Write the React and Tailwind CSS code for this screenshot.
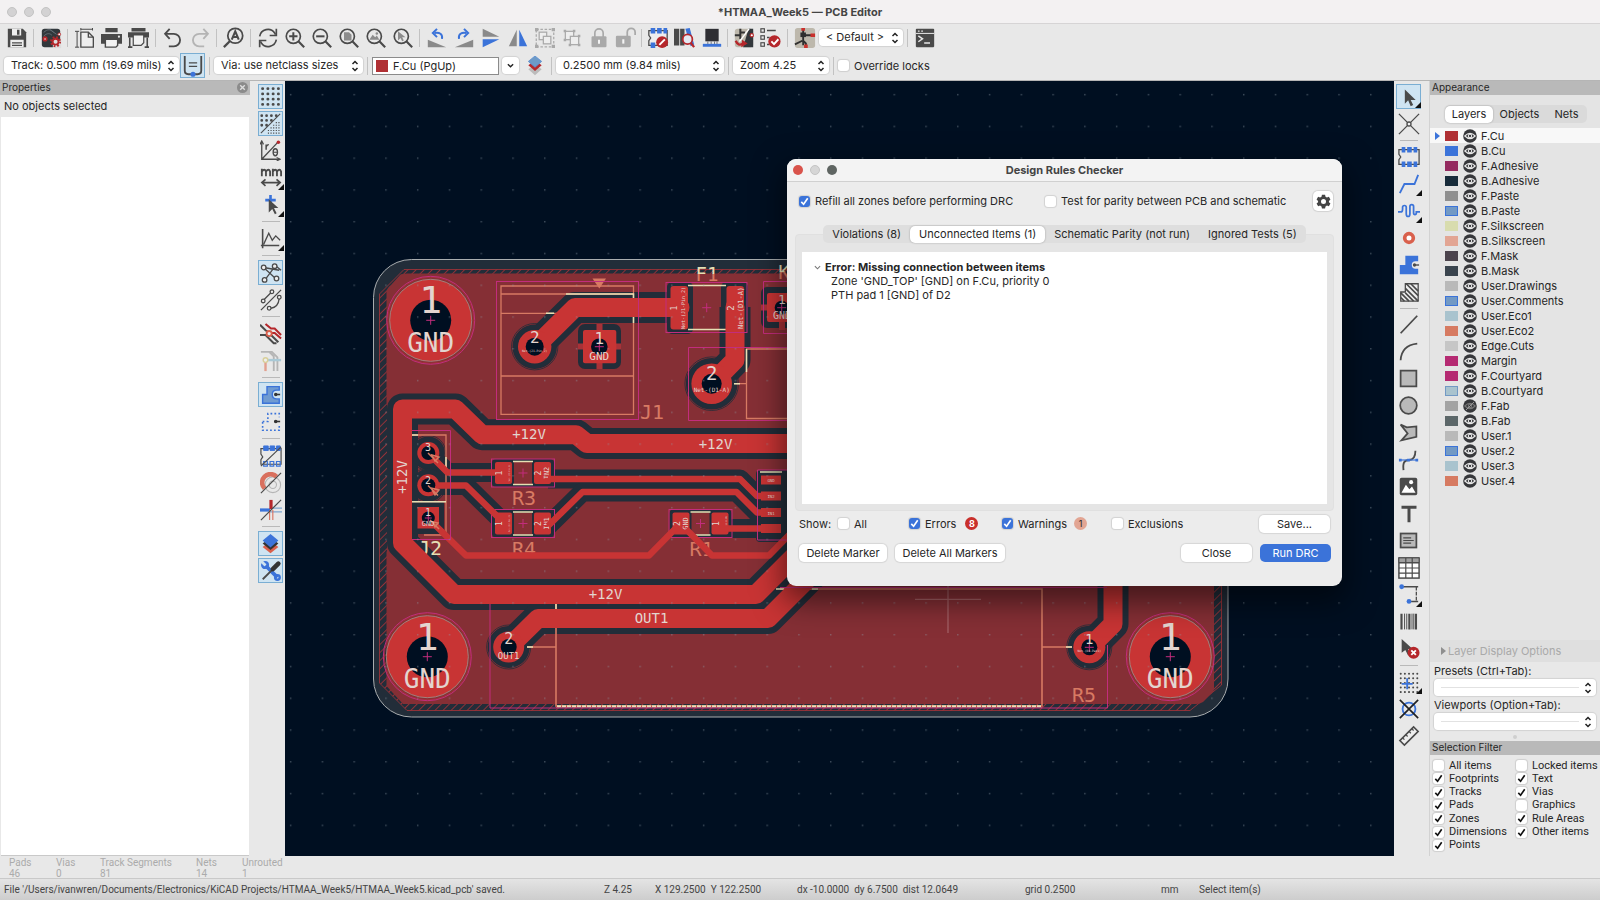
import React from 'react';
import { clsx } from 'clsx';

const INK = '#4a4a4a';
const BLUE = '#3b73d9';
const RED = '#b5272b';

const Icon = ({ children, size = 20 }) => (
  <svg width={size} height={size} viewBox="0 0 24 24" fill="none" stroke={INK} strokeWidth="2" className="shrink-0" aria-hidden="true">
    {children}
  </svg>
);

const Lens = ({ children }) => (
  <Icon>
    <circle cx="10" cy="10" r="8.5" />
    <path d="M16 16l7 7" strokeWidth="2.6" />
    {children}
  </Icon>
);

const icons = {
  save: (
    <Icon>
      <path d="M1 1h18l4 4v18H1z" fill={INK} stroke="none" />
      <path d="M6 1h11v8H6zM4 14h16v9H4z" fill="#eee" stroke="none" />
      <path d="M12 2h3v6h-3zM6 17h12v1.5H6zM6 20h12v1.5H6z" fill={INK} stroke="none" />
    </Icon>
  ),
  boardSetup: (
    <Icon size={22}>
      <rect x="2" y="2" width="20" height="20" rx="3" fill="#32383c" stroke="none" />
      <path d="M4 6c4-4 8-4 11 0M4 10c4-4 7-3 9-1M11 3l7 5" stroke="#667077" strokeWidth="1" />
      <circle cx="5.5" cy="13" r="1.800" fill="#fff" stroke={RED} />
      <path d="M14 14h9v9h-9z" fill="#ddd" stroke="none" />
      <circle cx="17" cy="16" r="3.200" stroke={RED} strokeWidth="2" fill="#ddd" />
      <circle cx="17" cy="16" r="5" stroke={RED} strokeWidth="2" strokeDasharray="2 1.930" />
      <circle cx="21" cy="8" r="1.500" fill="#fff" stroke={RED} strokeWidth="1" />
    </Icon>
  ),
  page: (
    <Icon>
      <path d="M7 5h9l6 6v12H7z" fill="#eee" strokeWidth="1.6" />
      <path d="M16 5v6h6" strokeWidth="1.6" />
      <path d="M2.500 4v19M0 4h5M0 23h5M7 0v3M21 0v3M7 1.500h14" strokeWidth="1.2" />
    </Icon>
  ),
  print: (
    <Icon size={21}>
      <path d="M5 1h14v5H5zM0 8h24v11H0z" fill={INK} stroke="none" />
      <path d="M5 14h14v7l-2 2H5z" fill="#f2f2f2" strokeWidth="1.6" />
      <circle cx="20.500" cy="11" r="1.200" fill="#eee" stroke="none" />
    </Icon>
  ),
  plot: (
    <Icon size={21}>
      <path d="M4 1h16v4H4zM0 6h24v6H0z" fill={INK} stroke="none" />
      <path d="M2 12v11M22 12v11M0 23h5M19 23h5" strokeWidth="1.8" />
      <path d="M6 9h12v9l-3 3H6z" fill="#f2f2f2" strokeWidth="1.4" />
    </Icon>
  ),
  undo: (
    <Icon>
      <path d="M3 7h10a7.500 7.500 0 0 1 0 15H7" strokeWidth="2.200" />
      <path d="M8 1L2.500 7L8 13" strokeWidth="2.200" />
    </Icon>
  ),
  redo: (
    <Icon>
      <g stroke="#b4b4b4">
        <path d="M21 7H11a7.500 7.500 0 0 0 0 15h6" strokeWidth="2.200" />
        <path d="M16 1l5.500 6L16 13" strokeWidth="2.200" />
      </g>
    </Icon>
  ),
  find: (
    <Icon size={21}>
      <circle cx="14" cy="10" r="8.500" />
      <path d="M8 16l-7 7" strokeWidth="2.600" />
      <path d="M10 14.500L14 5l4 9.500M11.500 11.500h5" strokeWidth="2.400" />
    </Icon>
  ),
  refresh: (
    <Icon>
      <path d="M2 10a10 10 0 0 1 18-4l1 2M22 14a10 10 0 0 1-18 4l-1-2" />
      <path d="M22 1v8h-8M2 23v-8h8" />
    </Icon>
  ),
  zoomIn: <Lens><path d="M10 5v10M5 10h10" strokeWidth="2.400" /></Lens>,
  zoomOut: <Lens><path d="M5 10h10" strokeWidth="2.400" /></Lens>,
  zoomPage: <Lens><path d="M6 5h6l3 3v7H6z" fill="#8c8c8c" stroke="none" /></Lens>,
  zoomObjects: (
    <Lens>
      <path d="M4 14l4-6 3 3 2-2 3 5z" fill="#8c8c8c" stroke="none" />
      <circle cx="13" cy="6.500" r="1.500" fill="#8c8c8c" stroke="none" />
    </Lens>
  ),
  zoomSelection: <Lens><path d="M6 4v11l3-3 2 4 2-1-2-4h4z" fill="#8c8c8c" stroke="none" /></Lens>,
  rotateCcw: (
    <Icon>
      <path d="M1 14v9h22z" fill="#8a8a8a" stroke="none" />
      <path d="M18 13c1-6-3-8-9-7" stroke={BLUE} strokeWidth="2.400" />
      <path d="M12 1L7 6l5 5" stroke={BLUE} strokeWidth="2.400" />
    </Icon>
  ),
  rotateCw: (
    <Icon>
      <path d="M23 14v9H1z" fill="#8a8a8a" stroke="none" />
      <path d="M6 13C5 7 9 5 15 6" stroke={BLUE} strokeWidth="2.400" />
      <path d="M12 1l5 5-5 5" stroke={BLUE} strokeWidth="2.400" />
    </Icon>
  ),
  flipV: (
    <Icon>
      <path d="M2 1l20 9.500H2z" fill="#8a8a8a" stroke="none" />
      <path d="M2 23l20-9.500H2z" fill={BLUE} stroke="none" />
    </Icon>
  ),
  flipH: (
    <Icon>
      <path d="M1 22L10.500 2v20z" fill="#8a8a8a" stroke="none" />
      <path d="M23 22L13.500 2v20z" fill={BLUE} stroke="none" />
    </Icon>
  ),
  group: (
    <Icon>
      <g stroke="#a9a9a9">
        <rect x="1.500" y="1.500" width="21" height="21" strokeWidth="1.500" strokeDasharray="3 2" />
        <rect x="5" y="5" width="9" height="9" fill="#eee" strokeWidth="1.500" />
        <rect x="10" y="10" width="9" height="9" fill="#eee" strokeWidth="1.500" />
        <path d="M0 0h4v4H0zM20 0h4v4h-4zM0 20h4v4H0zM20 20h4v4h-4z" fill="#a9a9a9" stroke="none" />
      </g>
    </Icon>
  ),
  ungroup: (
    <Icon>
      <g stroke="#a9a9a9" strokeWidth="1.500">
        <rect x="4" y="4" width="10" height="10" fill="#eee" />
        <rect x="10" y="10" width="10" height="10" fill="#eee" />
        <path d="M2 2h3v3H2zM13 2h3v3h-3zM2 13h3v3H2zM19 19h3v3h-3zM19 8h3v3h-3zM8 19h3v3H8z" fill="#a9a9a9" stroke="none" />
      </g>
    </Icon>
  ),
  lock: (
    <Icon>
      <path d="M7 11V6a5 5 0 0 1 10 0v5" stroke="#a9a9a9" strokeWidth="2" />
      <rect x="3" y="10" width="18" height="13" rx="1.500" fill="#a9a9a9" stroke="none" />
      <path d="M12 14v5" stroke="#f4f4f4" strokeWidth="2.400" />
    </Icon>
  ),
  unlock: (
    <Icon size={21}>
      <path d="M14 11V6a4.500 4.500 0 0 1 9 0v3" stroke="#a9a9a9" strokeWidth="2" />
      <rect x="1" y="10" width="17" height="13" rx="1.500" fill="#a9a9a9" stroke="none" />
      <path d="M9.500 14v5" stroke="#f4f4f4" strokeWidth="2.400" />
    </Icon>
  ),
  footprintCheck: (
    <Icon size={22}>
      <path d="M2 4h20v16H2v-5l2-3-2-3z" strokeWidth="1.400" fill="#eee" />
      <path d="M4 1h5v6H4zM11 1h5v6h-5zM18 1h4v6h-4zM4 17h5v6H4z" fill={BLUE} stroke="none" />
      <circle cx="16.500" cy="16.500" r="6.500" fill={RED} stroke="none" />
      <path d="M13.500 19.500l6-6" stroke="#fff" strokeWidth="2.200" />
    </Icon>
  ),
  library: (
    <Icon size={21}>
      <path d="M0 2h6v19H0zM7 2h5v19H7z" fill={INK} stroke="none" />
      <path d="M13 2l5-1 5 19-4 2z" fill={BLUE} stroke="none" />
      <circle cx="15.500" cy="14" r="5.500" fill="#e4e9f2" stroke={RED} />
      <path d="M19 18l4 5" stroke={RED} strokeWidth="2.600" />
    </Icon>
  ),
  viewer3d: (
    <Icon size={20}>
      <path d="M4 1h16v15H4z" fill="#2e2e33" stroke="none" />
      <path d="M7 16v4M11 16v4M15 16v4M18 16v4" stroke="#77777d" strokeWidth="1.200" />
      <path d="M1 19h22v3.500H1z" fill={BLUE} stroke="none" />
    </Icon>
  ),
  updatePcb: (
    <Icon size={22}>
      <rect x="2" y="2" width="20" height="20" rx="3" fill="#bdb8ac" stroke="none" />
      <path d="M17 2h5v20H11z" fill="#33383c" stroke="none" />
      <path d="M2 9h6V2M8 6h5M8 9v4" strokeWidth="2.200" stroke="#333" />
      <path d="M17.500 2L7 16" stroke="#fff" strokeWidth="1.600" />
      <path d="M3 15c2 5 5 5 8 3" stroke={RED} strokeWidth="2.600" />
      <path d="M9 22l1-8 6 4z" fill={RED} stroke="none" />
      <circle cx="20.500" cy="9" r="1.800" fill="#fff" stroke={RED} strokeWidth="1.200" />
    </Icon>
  ),
  drc: (
    <Icon size={21}>
      <g strokeWidth="1.300">
        <rect x="1" y="2" width="4" height="4" />
        <rect x="1" y="10" width="4" height="4" />
        <rect x="1" y="18" width="4" height="4" />
        <path d="M8 4h10M8 12h3M8 20h3" strokeWidth="1.800" />
      </g>
      <circle cx="16.500" cy="16.500" r="7" fill={RED} stroke="none" />
      <path d="M13 16.500l3 3 5-5.500" stroke="#fff" strokeWidth="2.200" />
    </Icon>
  ),
  schematic: (
    <Icon size={22}>
      <rect x="1" y="1" width="22" height="22" rx="3" fill="#bdb8ac" stroke="none" />
      <path d="M10 2v18M10 9h9M1 19l8-4M10 15l3 3v5" stroke="#2f2f2f" strokeWidth="2" />
      <path d="M7 6h6v5H7z" fill="#2f2f2f" stroke="none" />
      <path d="M8 1h4v3H8zM18 7h5v4h-5zM11 19h4v4h-4z" fill="#c9302c" stroke="none" />
    </Icon>
  ),
  terminal: (
    <Icon size={20}>
      <rect x="1" y="1" width="22" height="22" rx="1" fill={INK} stroke="none" />
      <path d="M1 6.500h22" stroke="#e8e8e8" strokeWidth="1.200" />
      <path d="M3.500 3.800h2M7.500 3.800h2" stroke="#e8e8e8" strokeWidth="1.500" />
      <path d="M4 9.500l5 3.500-5 3.500M11 18h7" stroke="#e8e8e8" strokeWidth="1.800" />
    </Icon>
  ),
  autoTrack: (
    <Icon size={22}>
      <path d="M3 1v16q0 4 4 4h10q4 0 4-4V1" strokeWidth="2" />
      <path d="M7.500 8.500h9M7.500 12.500h9" strokeWidth="1.300" />
      <circle cx="12" cy="21" r="2.800" fill={BLUE} stroke="none" />
    </Icon>
  ),
  layerStack: (
    <Icon>
      <path d="M12 10l8 6-8 7-8-7z" fill="#bbb" stroke="none" />
      <path d="M12 5l8 6-8 7-8-7z" fill={RED} stroke="none" />
      <path d="M12 0l8 6.500-8 7-8-7z" fill="#6d9ac8" stroke="#5c8fd0" strokeWidth="1" />
    </Icon>
  ),
  grid: (
    <Icon size={21}>
      <path d="M3 3h20M3 9h20M3 15h20M3 21h20" strokeDasharray="0.010 6" strokeLinecap="round" strokeWidth="3.400" />
    </Icon>
  ),
  gridOverride: (
    <Icon size={21}>
      <path d="M2 3h18M2 8.500h12M2 14h7" strokeDasharray="0.010 5.500" strokeLinecap="round" strokeWidth="3.200" />
      <path d="M18 11h6M15 14h9M12 17h12M9 20h15M9 23h15" strokeDasharray="1.300 1.700" strokeWidth="1.300" />
      <path d="M1 23L23 1" strokeWidth="1.300" />
    </Icon>
  ),
  polar: (
    <Icon size={21}>
      <path d="M2 2v20h20M2 22L20 3" strokeWidth="1.500" />
      <path d="M0 5l2-4 2 4M19 20l4 2-4 2" strokeWidth="1.300" />
      <circle cx="21" cy="2.500" r="2" fill={RED} stroke="none" />
      <path d="M7 11V5M7 8q1-3 3-2.500" strokeWidth="1.700" />
      <ellipse cx="17.500" cy="14" rx="2.500" ry="4" strokeWidth="1.500" />
      <path d="M15 14h5" strokeWidth="1.200" />
    </Icon>
  ),
  mm: (
    <Icon size={22}>
      <path d="M2 10V2M2 5q3-4 4.500 0v5M6.500 5q3-4 4.500 0v5M14 10V2M14 5q3-4 4.500 0v5M18.500 5q3-4 4.500 0v5" />
      <path d="M2 17h20M6 13.500L2 17l4 3.500M18 13.500l4 3.500-4 3.500" strokeWidth="1.800" />
    </Icon>
  ),
  cursorShape: (
    <Icon size={21}>
      <path d="M12 1v12M6 7h12" stroke={BLUE} strokeWidth="3" />
      <path d="M10 6v15l4-4 3 6 2-1-3-6h5z" fill={INK} stroke="none" />
    </Icon>
  ),
  freeAngle: (
    <Icon size={21}>
      <path d="M3 1v22M1 20h21" strokeWidth="1.800" />
      <path d="M4 19l6-13 4 8 4-5 5 5" strokeWidth="1.500" />
    </Icon>
  ),
  ratsnest: (
    <Icon size={22}>
      <path d="M4 6l17 3M4 6l13 12M5 20L17 4M17 4l6 5" strokeWidth="1.400" />
      <g fill="#eee" strokeWidth="1.400">
        <circle cx="4" cy="6" r="2.500" />
        <circle cx="16" cy="4.500" r="2.500" />
        <circle cx="5" cy="19.500" r="2.500" />
        <circle cx="18" cy="18" r="2.500" />
      </g>
    </Icon>
  ),
  ratsnestCurve: (
    <Icon size={22}>
      <path d="M1 23L23 1M4 12L13 3M12 21q8-1 9-11" strokeWidth="1.400" />
      <g fill="#eee" strokeWidth="1.400">
        <circle cx="3.500" cy="13" r="2" />
        <circle cx="13" cy="3" r="2" />
        <circle cx="10" cy="21" r="2" />
        <circle cx="21" cy="9" r="2" />
      </g>
    </Icon>
  ),
  netHighlight: (
    <Icon size={22}>
      <path d="M6 1l6 5h4l7 7M12 11h4l7 6" stroke={RED} strokeWidth="2.200" />
      <path d="M0 2l6 6 3 2M0 13h6l9 9h3M12 13l8 8" strokeWidth="2.200" />
      <circle cx="10" cy="11.500" r="2.800" fill="#eee" stroke="#d95f4c" />
    </Icon>
  ),
  netColors: (
    <Icon size={22}>
      <path d="M1 2h9l5 5v16M7 2h6l6 6v15" stroke="#b5b5b5" strokeWidth="2" />
      <path d="M6 11h17" stroke="#a9c9d6" strokeWidth="2.600" />
      <path d="M6 11v12" stroke="#e2a08e" strokeWidth="2.600" />
      <circle cx="6" cy="11" r="2.500" fill="#eee" stroke="#d8cf9a" strokeWidth="1.600" />
    </Icon>
  ),
  zoneFill: (
    <Icon size={21}>
      <path d="M3 12h5V3h14v4h-3q-5 0-5 5t5 5h3v5H3z" fill="#6f9bd1" stroke={BLUE} strokeWidth="1.600" />
      <path d="M17 12h6" stroke="#333" strokeWidth="1.800" />
      <circle cx="18" cy="12" r="2" fill="#333" stroke="none" />
    </Icon>
  ),
  zoneOutline: (
    <Icon size={21}>
      <path d="M3 12h6V3h13v4M22 17v5H3V12" stroke={BLUE} strokeWidth="1.800" strokeDasharray="2 2.500" />
      <path d="M16 12h7" stroke="#333" strokeWidth="1.800" />
      <circle cx="18" cy="12" r="2" fill="#333" stroke="none" />
    </Icon>
  ),
  padOutline: (
    <Icon size={22}>
      <path d="M1 4h22v17H1v-5l2-3-2-3z" strokeWidth="1.300" />
      <path d="M4 1h5v5H4zM11 1h5v5h-5zM18 1h4v5h-4z" fill={BLUE} stroke={BLUE} strokeWidth="1" />
      <path d="M4 18h4v5H4zM11 18h4v5h-4zM18 18h4v5h-4z" stroke={BLUE} strokeWidth="1.300" />
      <path d="M1 23L23 2" strokeWidth="1.300" />
    </Icon>
  ),
  viaOutline: (
    <Icon size={22}>
      <circle cx="14" cy="14" r="8.500" stroke="#b5b5b5" strokeWidth="1.200" />
      <circle cx="14" cy="14" r="4" stroke="#b5b5b5" strokeWidth="1.200" />
      <path d="M5 18A8 8 0 1 1 18 5" stroke="#d9705e" strokeWidth="5" />
      <path d="M1 23L23 1" strokeWidth="1.300" />
    </Icon>
  ),
  trackOutline: (
    <Icon size={22}>
      <path d="M0 12h11" stroke={BLUE} strokeWidth="3.500" />
      <path d="M11 10h13M11 14h13" stroke="#7ea6cf" strokeWidth="1.200" />
      <path d="M12 1v10" stroke={RED} strokeWidth="3.500" />
      <path d="M10.500 12v11M14 12v11" stroke="#d9705e" strokeWidth="1.200" />
      <path d="M1 23L23 1" strokeWidth="1.300" />
    </Icon>
  ),
  layersManager: (
    <Icon size={21}>
      <path d="M12 9l9 7-9 7-9-7z" fill="#d9604c" stroke="none" />
      <path d="M12 5l9 7-9 7.500-9-7.500z" fill="#333" stroke="none" />
      <path d="M12 1l9 7.500-9 8-9-8z" fill={BLUE} stroke="none" />
    </Icon>
  ),
  tools: (
    <Icon size={22}>
      <path d="M6 6l13 13" stroke={BLUE} strokeWidth="4" />
      <circle cx="5.500" cy="5.500" r="3" stroke={BLUE} strokeWidth="2.800" />
      <circle cx="19" cy="19" r="2.500" stroke={BLUE} strokeWidth="2.600" />
      <path d="M1 1l4 4" stroke="#cfe3ef" strokeWidth="3" />
      <path d="M3 21l10-10" strokeWidth="2" />
      <path d="M14 10l6-6" stroke="#333" strokeWidth="5" strokeLinecap="round" />
    </Icon>
  ),
  select: (
    <Icon size={20}>
      <path d="M7 3v17l4-4 3 7 3-1.500-3-6h6z" fill={INK} stroke="none" />
    </Icon>
  ),
  localRatsnest: (
    <Icon size={22}>
      <path d="M1 1l22 22M23 1L1 23" strokeWidth="1.400" />
      <circle cx="12" cy="12" r="2.200" fill="#eee" strokeWidth="1.400" />
    </Icon>
  ),
  footprint: (
    <Icon size={22}>
      <path d="M1 4h22v16H1v-5l2-3-2-3z" strokeWidth="1.400" />
      <path d="M4 1h4v6H4zM10 1h5v6h-5zM17 1h4v6h-4zM4 17h4v6H4zM10 17h5v6h-5zM17 17h4v6h-4z" fill={BLUE} stroke="none" />
    </Icon>
  ),
  route: <Icon size={22}><path d="M2 22l5-10h11l4-10" stroke={BLUE} /></Icon>,
  tune: (
    <Icon size={22}>
      <path d="M0 13h3q2 0 2-3V8q0-2 2-2t2 2v7q0 3 2 3t2-3V7q0-2 2-2t2 2v7q0 2 1.500 2t1.500-2v-1h4" stroke={BLUE} strokeWidth="1.900" />
    </Icon>
  ),
  via: <Icon size={20}><circle cx="12" cy="12" r="5.200" stroke="#d9604c" strokeWidth="4.400" fill="#fff" /></Icon>,
  zone: (
    <Icon size={22}>
      <path d="M2 12h6V2h14v6h-3q-4 0-4 4t4 4h3v6H2z" fill={BLUE} stroke="none" />
      <path d="M17 12h6" strokeWidth="1.500" />
      <circle cx="18" cy="12" r="1.800" fill={INK} stroke="none" />
    </Icon>
  ),
  ruleArea: (
    <Icon size={22}>
      <path d="M3 12h5V3h14v19H3z" fill="#eee" strokeWidth="1.400" />
      <path d="M9 3l13 13M8 8l14 14M14 3l8 8M8 13l9 9M3 13l9 9M3 18l4 4" strokeWidth="1.800" />
    </Icon>
  ),
  line: <Icon size={21}><path d="M3 22L22 2" /></Icon>,
  arc: <Icon size={21}><path d="M3 22Q4 5 22 3" /></Icon>,
  rect: <Icon size={21}><rect x="3" y="3" width="18" height="18" fill="#b9b9b9" /></Icon>,
  circle: <Icon size={21}><circle cx="12" cy="12" r="9.500" fill="#b9b9b9" /></Icon>,
  polygon: <Icon size={21}><path d="M3 3l7 3 11-1v12L4 21l7-8z" fill="#b9b9b9" /></Icon>,
  bezier: (
    <Icon size={22}>
      <path d="M6 23c-1-8 1-11 6-11s7-3 7-10" strokeWidth="2" />
      <path d="M2 12h19" stroke={BLUE} strokeWidth="1.300" />
      <path d="M1 10.500h3v3H1zM10 10.500h3v3h-3zM19 10.500h3v3h-3z" fill={BLUE} stroke="none" />
    </Icon>
  ),
  image: (
    <Icon size={21}>
      <rect x="2" y="2" width="20" height="20" rx="2" fill={INK} stroke="none" />
      <path d="M4 19l5-9 4 5 3-3 4 7z" fill="#fff" stroke="none" />
      <circle cx="15" cy="7" r="2.300" fill="#fff" stroke="none" />
    </Icon>
  ),
  text: <Icon size={20}><path d="M3 4h18M12 4v18" strokeWidth="3.600" /></Icon>,
  textBox: (
    <Icon size={21}>
      <rect x="3" y="4" width="18" height="16" fill="#b9b9b9" />
      <path d="M6 9h9M6 12h12M6 15h9" strokeWidth="1.200" />
    </Icon>
  ),
  table: (
    <Icon size={22}>
      <rect x="1" y="1" width="22" height="22" fill="#fff" strokeWidth="1.600" />
      <path d="M1 1h22v5H1z" fill="#a0a0a0" strokeWidth="1" />
      <path d="M1 6.500h22M1 12h22M1 17.500h22M8.500 1v22M15.500 1v22" strokeWidth="1.300" />
    </Icon>
  ),
  dimension: (
    <Icon size={22}>
      <path d="M4 3h18M12 19h10" strokeWidth="1.600" />
      <path d="M20 3v16" strokeWidth="1.400" strokeDasharray="4 1.500" />
      <circle cx="4" cy="3" r="2.600" fill={BLUE} stroke="none" />
      <circle cx="12" cy="19" r="2.600" fill={BLUE} stroke="none" />
    </Icon>
  ),
  barcode: (
    <Icon size={21}>
      <path d="M4 3v18M13 3v18M20.500 3v18" strokeWidth="2.500" />
      <path d="M7.500 3v18M10 3v18M16 3v18M18 3v18" strokeWidth="1.100" />
    </Icon>
  ),
  deleteTool: (
    <Icon size={22}>
      <path d="M4 1v15l4-3 3 6 2-1-2-6h5z" fill={INK} stroke="none" />
      <circle cx="17" cy="16" r="6.500" fill={RED} stroke="none" />
      <path d="M14.500 13.500l5 5M19.500 13.500l-5 5" stroke="#fff" />
    </Icon>
  ),
  gridOrigin: (
    <Icon size={22}>
      <path d="M3 3h20M3 8h20M3 13h20M3 18h20M3 23h20" strokeDasharray="0.010 4.500" strokeLinecap="round" strokeWidth="2.200" />
      <path d="M10 8v12M4 14h12" stroke={BLUE} strokeWidth="2" />
    </Icon>
  ),
  drillOrigin: (
    <Icon size={22}>
      <circle cx="12" cy="12" r="7" stroke={BLUE} />
      <path d="M2 2l20 20M22 2L2 22" stroke="#222" strokeWidth="1.800" />
    </Icon>
  ),
  ruler: (
    <Icon size={22}>
      <path d="M2 17L17 2l5 5L7 22z" fill="#eee" strokeWidth="1.700" />
      <path d="M5 14l2 2M8.500 10.500l2 2M12 7l2 2M15 4l2 2" strokeWidth="1.400" />
    </Icon>
  ),
};

const topTools = [
  ['save', 'Save'], null, ['boardSetup', 'Board setup'], null,
  ['page', 'Page settings'], ['print', 'Print'], ['plot', 'Plot'], null,
  ['undo', 'Undo'], ['redo', 'Redo'], null, ['find', 'Find'], null,
  ['refresh', 'Refresh'], ['zoomIn', 'Zoom in'], ['zoomOut', 'Zoom out'], ['zoomPage', 'Zoom to fit'],
  ['zoomObjects', 'Zoom to objects'], ['zoomSelection', 'Zoom to selection'], null,
  ['rotateCcw', 'Rotate counterclockwise'], ['rotateCw', 'Rotate clockwise'], ['flipV', 'Mirror vertically'],
  ['flipH', 'Mirror horizontally'], ['group', 'Group'], ['ungroup', 'Ungroup'], ['lock', 'Lock'], ['unlock', 'Unlock'], null,
  ['footprintCheck', 'Footprint editor'], ['library', 'Footprint library'], ['viewer3d', '3D viewer'], null,
  ['updatePcb', 'Update PCB from schematic'], ['drc', 'Design rules checker'], null, ['schematic', 'Schematic editor'],
];

const leftTools = [
  ['grid', 'Show grid', 'on'], ['gridOverride', 'Grid overrides', 'on'], ['polar', 'Polar coordinates'],
  ['mm', 'Millimeters', 'more'], ['cursorShape', 'Cursor shape', 'more'], null,
  ['freeAngle', 'Line modes', 'more'], null, ['ratsnest', 'Show ratsnest', 'on'], ['ratsnestCurve', 'Curved ratsnest'], null,
  ['netHighlight', 'Inactive layer view'], ['netColors', 'Net highlighting'], null,
  ['zoneFill', 'Show filled zones', 'on'], ['zoneOutline', 'Show zone outlines'], null,
  ['padOutline', 'Sketch pads'], ['viaOutline', 'Sketch vias'], ['trackOutline', 'Sketch tracks'], null,
  ['layersManager', 'Appearance manager', 'on'], ['tools', 'Properties manager', 'on'],
];

const rightTools = [
  ['select', 'Select', 'on more'], ['localRatsnest', 'Local ratsnest'], null,
  ['footprint', 'Place footprints'], ['route', 'Route tracks', 'more'], ['tune', 'Tune length', 'more'],
  ['via', 'Place vias'], ['zone', 'Draw zones'], ['ruleArea', 'Draw rule areas'], null,
  ['line', 'Draw lines'], ['arc', 'Draw arcs'], ['rect', 'Draw rectangles'], ['circle', 'Draw circles'],
  ['polygon', 'Draw polygons'], ['bezier', 'Draw bezier'], ['image', 'Place image'], ['text', 'Place text'],
  ['textBox', 'Draw text box'], ['table', 'Draw table'], ['dimension', 'Draw dimension', 'more'],
  ['barcode', 'Place barcode'], ['deleteTool', 'Delete'], null,
  ['gridOrigin', 'Grid origin', 'more'], ['drillOrigin', 'Drill origin'], ['ruler', 'Measure'],
];

const layers = [
  ['F.Cu', 'bg-[#b03034]'], ['B.Cu', 'bg-[#3b73d9]'], ['F.Adhesive', 'bg-[#942a5f]'], ['B.Adhesive', 'bg-[#172b3a]'],
  ['F.Paste', 'bg-[#8f8f8f]'], ['B.Paste', 'bg-[#7299c4] border border-[#3b73d9]'], ['F.Silkscreen', 'bg-[#d8dcae]'],
  ['B.Silkscreen', 'bg-[#e2a593]'], ['F.Mask', 'bg-[#4b434c]'], ['B.Mask', 'bg-[#3a444e]'], ['User.Drawings', 'bg-[#b9b9b9]'],
  ['User.Comments', 'bg-[#7299c4] border border-[#3b73d9]'], ['User.Eco1', 'bg-[#a9c3ce]'], ['User.Eco2', 'bg-[#d67a61]'],
  ['Edge.Cuts', 'bg-[#c6c6c6]'], ['Margin', 'bg-[#b52a72]'], ['F.Courtyard', 'bg-[#b52a72]'],
  ['B.Courtyard', 'bg-[#a9c3ce] border border-[#7299c4]'], ['F.Fab', 'bg-[#a3a3a3]'], ['B.Fab', 'bg-[#5c6769]'],
  ['User.1', 'bg-[#b9b9b9]'], ['User.2', 'bg-[#7299c4] border border-[#3b73d9]'], ['User.3', 'bg-[#a9c3ce]'], ['User.4', 'bg-[#d67a61]'],
];

const filters = [
  ['All items', false], ['Locked items', false], ['Footprints', true], ['Text', true], ['Tracks', true], ['Vias', true],
  ['Pads', true], ['Graphics', false], ['Zones', true], ['Rule Areas', true], ['Dimensions', true], ['Other items', true],
  ['Points', true],
];

const ToolButton = ({ icon, label, flags = '' }) => (
  <button
    type="button"
    aria-label={label}
    className={clsx(
      'relative flex size-[25px] shrink-0 items-center justify-center',
      flags.includes('on') && 'border border-[#7aaed3] bg-[#cfe4f2]'
    )}
  >
    {icons[icon]}
    {flags.includes('more') && (
      <svg viewBox="0 0 6 6" className="absolute -right-px bottom-0 size-[6px]" aria-hidden="true">
        <path d="M6 0v6H0z" fill="#111" />
      </svg>
    )}
  </button>
);

const ToolColumn = ({ tools, className, ruleClass }) => (
  <div className={clsx('flex w-[35px] shrink-0 flex-col items-center gap-[2px] bg-[#e8e8e8] pt-[3px]', className)}>
    {tools.map((t, i) =>
      t ? <ToolButton key={i} icon={t[0]} label={t[1]} flags={t[2]} /> : <span key={i} className={clsx('h-px w-[18px] bg-[#b9b9b9]', ruleClass)} />
    )}
  </div>
);

const Divider = ({ className }) => <span className={clsx('h-[18px] w-px shrink-0 bg-[#c2c2c2]', className)} />;

const UpDown = () => (
  <svg viewBox="0 0 8 12" className="pointer-events-none col-start-1 row-start-1 mr-1 h-3 w-2 justify-self-end" fill="none" stroke="#222" strokeWidth="1.500" aria-hidden="true">
    <path d="M1.500 4L4 1.500 6.500 4M1.500 8L4 10.500 6.500 8" />
  </svg>
);

const Select = ({ value, label, className }) => (
  <span className={clsx('grid shrink-0 items-center', className)}>
    <select aria-label={label} className="col-start-1 row-start-1 h-[17px] w-full appearance-none rounded-[4px] bg-white pr-4 pl-[7px] leading-[17px] shadow-[0_0_1px_1px_#00000018]">
      <option>{value}</option>
    </select>
    {!value && <span className="pointer-events-none col-start-1 row-start-1 mr-[17px] ml-[7px] h-px bg-[#e2e2e2]" />}
    <UpDown />
  </span>
);

const Check = ({ label, checked = false, blue = false, className, children }) => (
  <label className={clsx('flex items-center gap-[5px] whitespace-nowrap', className)}>
    <span className="grid shrink-0 place-items-center">
      <input
        type="checkbox"
        defaultChecked={checked}
        className={clsx(
          'peer col-start-1 row-start-1 size-[11px] appearance-none rounded-[3px] bg-white shadow-[0_0_1px_1px_#0000001c]',
          blue && 'checked:bg-[#3b73d9]'
        )}
      />
      <svg viewBox="0 0 12 12" className="pointer-events-none invisible col-start-1 row-start-1 size-[11px] peer-checked:visible" fill="none" stroke={blue ? '#fff' : '#111'} strokeWidth="1.800" aria-hidden="true">
        <path d="M2.500 6.500L5 9l4.500-6.500" />
      </svg>
    </span>
    {label}
    {children}
  </label>
);

const PanelTitle = ({ children }) => (
  <div className="flex h-[14px] shrink-0 items-center justify-between bg-[#b9b9b9] px-[2px] pb-[2px] text-[10px] leading-[12px]">{children}</div>
);

// ---- board drawing ----

const COPPER = '#c83434';
const GAP = '#222d39';
const PINK = '#c22d7d';
const SILK = '#d87a63';
const PALE = '#e6dfb4';

const wide = [
  'M800 443.500H587L576 434.700H482L455.500 409H402.500V543L454 594.500H756L800 550.500',
  'M509 647L538 618.500H768L820 566.500',
  'M535 347L575 307.500H680',
  'M735 307V360L712 383.500',
  'M1113 560V624L1089.500 647.500',
];
const thin = [
  'M428 453L447.500 472.500H495',
  'M428 485.500H466L502 521',
  'M548 479H740L757 496H775',
  'M548 526L582.500 492H736.500L757 512.500H775',
  'M720 528.500H775',
];
const ground = 'M428 518L466 555.500H649L675 529M686 529L712 555.500H769L790 534';

const mounts = [[430.7, 320.3, 313, 352], [427.3, 656.7, 650, 688], [1170.3, 656.7, 650, 688]];
const roundPads = [[534.7, 346.7, 16.7, 9], [711.7, 383.7, 20.3, 10], [508.7, 647, 15.5, 8], [1089.3, 647.3, 16, 8], [428.3, 453, 11, 7], [428.3, 485.3, 11, 7]];

const Cross = ({ x, y, s = 4.5 }) => <path d={`M${x - s} ${y}h${2 * s}M${x} ${y - s}v${2 * s}`} stroke={PINK} fill="none" />;

const Label = ({ x, y, size = 14, fill = '#e3d5cf', vertical, children }) => (
  <text x={x} y={y} fontSize={size} fill={fill} textAnchor="middle" transform={vertical ? `rotate(-90 ${x} ${y})` : undefined}>
    {children}
  </text>
);

const Resistor = ({ x, y, left, right, name }) => (
  <g>
    <rect x={x - 31} y={y - 14} width="62" height="28" rx="4" fill={GAP} />
    <rect x={x - 9} y={y - 11} width="18" height="22" fill="#852f35" />
    <rect x={x - 28} y={y - 11} width="17" height="22" rx="2" fill={COPPER} />
    <rect x={x + 11} y={y - 11} width="17" height="22" rx="2" fill={COPPER} />
    <path d={`M${x - 10} ${y - 11.500}h20M${x - 10} ${y + 11.500}h20`} stroke={PALE} strokeWidth="1.500" />
    <rect x={x - 31.500} y={y - 14} width="63" height="28" fill="none" stroke={PINK} />
    <Cross x={x} y={y} />
    <Label x={x - 21} y={y} size={8} vertical>{left[0]}</Label>
    <Label x={x - 13} y={y} size={left[2]} vertical>{left[1]}</Label>
    <Label x={x + 18} y={y} size={8} vertical>{right[0]}</Label>
    <Label x={x + 26} y={y} size={right[2]} vertical>{right[1]}</Label>
    <Label x={x + 1} y={y + 32} size={20} fill={SILK}>{name}</Label>
  </g>
);

const Board = () => (
  <svg viewBox="285 81 1109 775" preserveAspectRatio="xMidYMid slice" className="block size-full font-['DejaVu_Sans_Mono',monospace]" aria-label="Board layout">
    <defs>
      <pattern id="dots" x="275" y="79" width="31.770" height="31.770" patternUnits="userSpaceOnUse">
        <rect x="15" y="15" width="1.300" height="1.300" fill="#8d99a3" opacity="0.550" />
      </pattern>
      <pattern id="hatch" width="5.700" height="5.700" patternUnits="userSpaceOnUse" patternTransform="rotate(45)">
        <path d="M0 0V6" stroke="#a83238" strokeWidth="1.600" />
      </pattern>
      <linearGradient id="silk" x1="0" y1="0" x2="0" y2="1">
        <stop offset="0.500" stopColor={PALE} />
        <stop offset="0.500" stopColor={SILK} />
      </linearGradient>
    </defs>
    <rect x="285" y="81" width="1109" height="775" fill="#000f21" />
    <rect x="373.500" y="259.500" width="854.500" height="457.500" rx="38" fill={GAP} stroke="#a9adaf" />
    <path d="M379.500 294L404 269.500H1197L1221.500 294V685L1190 710.500H407L379.500 683Z" fill="url(#hatch)" stroke="#a83238" strokeWidth="0.800" />
    <path d="M386.500 292Q387 288 391 285L400 275Q402 273.500 407 273.500H1200L1214 288V688Q1214 692 1210 695L1203 702Q1200 704 1196 704H403L386.500 686Z" fill="#852f35" />
    <path d="M380 403V545L387 552V403Z" fill={GAP} />
    <path d="M380 403V545L387 552V403Z" fill="url(#hatch)" />

    {/* clearances */}
    <g fill="none" stroke={GAP} strokeLinejoin="round">
      {wide.map((d) => <path key={d} d={d} strokeWidth="31" />)}
      {thin.map((d) => <path key={d} d={d} strokeWidth="19" />)}
      {roundPads.map(([x, y, r]) => <circle key={x + y} cx={x} cy={y} r={r + 2.500} strokeWidth="6" />)}
      {roundPads.map(([x, y, r]) => <circle key={x + y} cx={x} cy={y} r={r + 6.500} strokeWidth="0.800" />)}
      {mounts.map(([x, y]) => <circle key={x + y} cx={x} cy={y} r="43" stroke="#a83238" strokeWidth="0.800" />)}
    </g>
    <rect x="412" y="501" width="32" height="33" rx="3" fill={GAP} />
    <rect x="578" y="324" width="43" height="45" rx="7" fill={GAP} />
    <path d="M578 346.500h43M599.500 347v22M599.500 324v6" stroke="#a83238" strokeWidth="6" />
    <rect x="667" y="282" width="26" height="52" rx="5" fill={GAP} />
    <rect x="721" y="282" width="27" height="52" rx="5" fill={GAP} />
    <rect x="761" y="287" width="40" height="41" rx="6" fill={GAP} />
    <path d="M761 307.500h10M782 322v8" stroke="#a83238" strokeWidth="6" />
    <rect x="756" y="470" width="40" height="72" rx="4" fill={GAP} />

    {/* silkscreen under copper */}
    <g fill="none" stroke={SILK} strokeWidth="1.300">
      <path d="M501 286H633.500V414.300H501ZM501 294H633.500M501 313.300H633.500M501 376H633.500" />
      <path d="M412 435H446V535H424M412 501.700H446" />
      <path d="M800 349H746.500V418.500H800M734 383.700H746" />
      <path d="M556 604V706H1042V589H780M527 647H556M1042 647H1072" strokeWidth="1.600" />
    </g>
    <g fill="none" stroke={PALE} strokeWidth="1.500">
      <path d="M566 294H633.500V298M633.500 317V323M546 313.300H554M746.500 349V372M734 383.700H740" />
      <path d="M556 604V609M527 647H533M1066 647H1072M776 589H784M812 589H818M412 501.700H446M412 435H418M446 457V468" />
      <path d="M556 706.300H1042" strokeWidth="2.200" />
      <path d="M556 706.300H1042" stroke="#c9473f" strokeWidth="2.200" strokeDasharray="1 4" />
      <path d="M688 285.500H726M688 329.500H726" />
    </g>
    <path d="M592.500 278.500H606L599.300 288.500Z" fill={SILK} />
    <Label x={652} y={419} size={20} fill={SILK}>J1</Label>
    <Label x={707} y={281} size={19} fill="url(#silk)">F1</Label>
    <Label x={784} y={279} size={19} fill="url(#silk)">K</Label>
    <Label x={1084} y={702} size={20} fill={SILK}>R5</Label>
    <Label x={430} y={555} size={20} fill={PALE}>J2</Label>

    <Resistor x={523} y={473} name="R3" left={['1', 'Net-(J2-Pin_3)', 2]} right={['2', 'IN2', 7]} />
    <Resistor x={523} y={523.5} name="R4" left={['1', 'Net-(J2-Pin_2)', 2]} right={['2', 'IN1', 7]} />
    <Resistor x={700.5} y={523.5} name="R1" left={['2', 'GND', 7]} right={['1', 'Net-(U1-ILIM)', 2]} />

    {/* copper */}
    <g fill="none" stroke={COPPER} strokeLinejoin="round" strokeLinecap="round">
      {wide.map((d) => <path key={d} d={d} strokeWidth="19" />)}
      <g strokeWidth="6.500">
        {thin.map((d) => <path key={d} d={d} strokeLinecap="butt" />)}
        <path d={ground} strokeLinecap="butt" />
      </g>
    </g>
    <g fill={COPPER}>
      <rect x="583" y="330" width="33.300" height="33.300" rx="2" />
      <rect x="670.500" y="286" width="17.500" height="43.500" rx="3" />
      <rect x="726.500" y="286" width="17.500" height="43.500" rx="3" />
      <rect x="767" y="293" width="30" height="29" rx="2" />
      <rect x="417.500" y="507" width="21.500" height="21.500" />
      {[480, 496, 512.5, 528.5].map((y) => <rect key={y} x="761" y={y - 4.5} width="20" height="9" />)}
      {roundPads.map(([x, y, r]) => <circle key={x + y} cx={x} cy={y} r={r} />)}
      {mounts.map(([x, y]) => <circle key={x + y} cx={x} cy={y} r="41" stroke="#a08a84" strokeWidth="0.900" />)}
    </g>
    <g fill="#000f21">
      {roundPads.map(([x, y, , h]) => <circle key={x + y} cx={x} cy={y} r={h} />)}
      {mounts.map(([x, y]) => <circle key={x + y} cx={x} cy={y} r="20.500" />)}
      <circle cx="599.300" cy="346.700" r="8.300" />
      <circle cx="781.700" cy="307.700" r="7" />
      <circle cx="428.300" cy="518" r="6.500" />
    </g>
    <g fill="none" stroke={SILK} strokeWidth="1.500">
      <path d="M428 453l10 10M432 455l7 2-4 4zM428 485.500l10 10M431 488l8 2-4 5zM430 520l9 9M433 522l5 1-3 4z" />
    </g>

    {/* courtyards */}
    <g fill="none" stroke={PINK}>
      <rect x="496.500" y="281.500" width="142" height="138" />
      <rect x="666" y="282.500" width="81" height="50" />
      <path d="M800 281.500H763.500V333.500H800M800 347.500H688.500V420.500H800M412 430.500H450.500V539.500H412M800 470H757.500V540H800" />
      <path d="M490 604V708H1107.500V645M780 587.500H1107" />
      {mounts.map(([x, y]) => <circle key={x + y} cx={x} cy={y} r="44" />)}
    </g>
    <path d="M760 472H782" stroke={PALE} strokeWidth="1.500" />

    {mounts.map(([x, y, a, b]) => (
      <g key={x + y}>
        <Label x={x} y={a} size={38}>1</Label>
        <Label x={x} y={b} size={26}>GND</Label>
        <Cross x={x} y={y} />
      </g>
    ))}
    <Cross x={706.7} y={307.7} />
    <Cross x={599.3} y={346.7} />
    <Cross x={781.7} y={307.7} />
    <Cross x={428.3} y={518} s={3.5} />
    <Cross x={1089.3} y={647.3} />
    <Label x={534.7} y={343} size={16}>2</Label>
    <Label x={534.7} y={352} size={3}>Net-(J1-Pin_2)</Label>
    <Label x={599.3} y={344} size={16}>1</Label>
    <Label x={599.3} y={360} size={11}>GND</Label>
    <Label x={677} y={308} size={8} vertical>1</Label>
    <Label x={685} y={308} size={5} vertical>Net-(J1-Pin_2)</Label>
    <Label x={734} y={308} size={9} vertical>2</Label>
    <Label x={743} y={308} size={7} vertical>Net-(D1-A)</Label>
    <Label x={711.7} y={380} size={19}>2</Label>
    <Label x={711.7} y={392} size={6}>Net-(D1-A)</Label>
    <Label x={782} y={304} size={13}>1</Label>
    <Label x={782} y={319} size={10}>GND</Label>
    <Label x={508.7} y={644} size={15}>2</Label>
    <Label x={508.7} y={659} size={9}>OUT1</Label>
    <Label x={1089.3} y={644} size={14}>1</Label>
    <Label x={1089.3} y={652} size={3}>Net-(D4-Pad1)</Label>
    <Label x={428} y={451} size={10}>3</Label>
    <Label x={428} y={484} size={10}>2</Label>
    <Label x={428} y={516} size={10}>1</Label>
    <Label x={428} y={526} size={7}>GND</Label>
    <Label x={529} y={439} size={14}>+12V</Label>
    <Label x={715.5} y={449} size={14}>+12V</Label>
    <Label x={605.5} y={599} size={14}>+12V</Label>
    <Label x={651.5} y={623} size={14}>OUT1</Label>
    <Label x={407} y={477} size={14} vertical>+12V</Label>
    <Label x={771} y={482} size={4}>GND</Label>
    <Label x={771} y={498} size={4}>IN2</Label>
    <Label x={771} y={515} size={4}>IN1</Label>

    <path d="M915 599.300H981M948 586V633" stroke="#b07478" strokeWidth="1.300" opacity="0.700" />
    <rect x="285" y="81" width="1109" height="775" fill="url(#dots)" />
  </svg>
);

// ---- dialog ----

const DrcDialog = () => {
  const tabs = ['Violations (8)', 'Unconnected Items (1)', 'Schematic Parity (not run)', 'Ignored Tests (5)'];
  const btn = 'h-[18px] rounded-[5px] bg-white text-center shadow-[0_0_1px_1px_#00000018]';
  return (
    <div role="dialog" aria-label="Design Rules Checker" className="absolute top-[78px] left-[502px] flex h-[427px] w-[555px] flex-col rounded-[9px] bg-[#ececec] shadow-[0_12px_30px_4px_#00000080]">
      <div className="grid h-[23px] shrink-0 grid-cols-[1fr_auto_1fr] items-center rounded-t-[9px] border-b border-[#d0d0d0] bg-[#f3f3f3] px-[6px]">
        <div className="flex gap-[7px]">
          <button type="button" aria-label="Close window" className="size-[10px] rounded-full bg-[#d9534b]" />
          <button type="button" aria-label="Minimize" className="size-[10px] rounded-full border border-[#c4c4c4] bg-[#d6d6d6]" />
          <button type="button" aria-label="Zoom window" className="size-[10px] rounded-full bg-[#5f6562]" />
        </div>
        <h2 className="text-[11px] font-bold text-[#444]">Design Rules Checker</h2>
      </div>
      <div className="flex h-[38px] shrink-0 items-center pr-[9px] pl-[12px]">
        <Check label="Refill all zones before performing DRC" checked blue className="w-[246px]" />
        <Check label="Test for parity between PCB and schematic" blue />
        <button type="button" aria-label="Options" className="ml-auto flex size-[20px] items-center justify-center rounded-[5px] bg-white shadow-[0_0_1px_1px_#0000001c]">
          <svg viewBox="0 0 24 24" className="size-[15px]" aria-hidden="true">
            <path fill="#444" fillRule="evenodd" d="M9.500 1h5l.7 3.200 2.300 1.300 3.100-1 2.500 4.300-2.400 2.200v2l2.400 2.200-2.500 4.300-3.100-1-2.300 1.300-.7 3.200h-5l-.7-3.200-2.300-1.300-3.100 1L.9 15.200 3.300 13v-2L.9 8.800l2.500-4.300 3.100 1 2.300-1.300zM12 8a4 4 0 1 0 0 8 4 4 0 0 0 0-8z" />
          </svg>
        </button>
      </div>
      <div className="mx-[8px] mt-[14px] flex h-[277px] flex-col rounded-[4px] border border-[#e0e0e0] bg-[#e5e5e5] px-[6px] pb-[6px]">
        <div className="z-10 mx-auto -mt-[10px] flex h-[18px] items-center rounded-[5px] bg-[#dedede]">
          {tabs.map((t, i) => (
            <button
              key={t}
              type="button"
              className={clsx('h-[17px] px-[9px] whitespace-nowrap', i === 1 && 'rounded-[5px] bg-white shadow-[0_0_2px_#00000050]')}
            >
              {t}
            </button>
          ))}
        </div>
        <div className="mt-[9px] grow bg-white py-[8px] pl-[12px] leading-[14px]">
          <p className="flex items-center gap-[4px] font-bold">
            <svg viewBox="0 0 8 8" className="size-[7px]" fill="none" stroke="#777" strokeWidth="1.200" aria-hidden="true">
              <path d="M1 2.500l3 3 3-3" />
            </svg>
            Error: Missing connection between items
          </p>
          <p className="pl-[17px]">Zone 'GND_TOP' [GND] on F.Cu, priority 0</p>
          <p className="pl-[17px]">PTH pad 1 [GND] of D2</p>
        </div>
      </div>
      <div className="flex h-[25px] shrink-0 items-center pr-[12px] pl-[12px]">
        <span className="w-[39px]">Show:</span>
        <Check label="All" blue className="w-[71px]" />
        <Check label="Errors" checked blue className="w-[93px]">
          <span className="ml-[4px] flex size-[13px] items-center justify-center rounded-full bg-[#c9302c] text-[9px] font-bold text-white">8</span>
        </Check>
        <Check label="Warnings" checked blue className="w-[110px]">
          <span className="ml-[2px] flex size-[13px] items-center justify-center rounded-full bg-[#e2a593] text-[9px]">1</span>
        </Check>
        <Check label="Exclusions" blue />
        <button type="button" className={clsx(btn, 'ml-auto w-[71px]')}>Save...</button>
      </div>
      <div className="flex h-[34px] shrink-0 items-center gap-[8px] pr-[11px] pl-[12px]">
        <button type="button" className={clsx(btn, 'w-[88px]')}>Delete Marker</button>
        <button type="button" className={clsx(btn, 'w-[110px]')}>Delete All Markers</button>
        <button type="button" className={clsx(btn, 'ml-auto w-[71px]')}>Close</button>
        <button type="button" className="h-[18px] w-[71px] rounded-[5px] bg-[#3b73d9] text-white">Run DRC</button>
      </div>
    </div>
  );
};

const Eye = ({ off }) => (
  <svg viewBox="0 0 14 14" className="size-[14px]" aria-hidden="true">
    <circle cx="7" cy="7" r="6.800" fill="#36373a" />
    <path d="M1.800 7Q7 1.800 12.200 7Q7 12.200 1.800 7Z" fill="none" stroke={off ? '#777' : '#e8e8e8'} strokeWidth="1.100" />
    <circle cx="7" cy="7" r="1.700" fill="none" stroke={off ? '#777' : '#e8e8e8'} strokeWidth="1.100" />
    {off && <path d="M3 11L11 3" stroke="#999" />}
  </svg>
);

const Appearance = () => (
  <aside className="flex w-[171px] shrink-0 flex-col border-l border-[#d2d2d2] bg-[#e8e8e8]">
    <PanelTitle>Appearance</PanelTitle>
    <div className="flex h-[567px] shrink-0 flex-col bg-[#e4e4e4]">
      <div className="mt-[10px] mb-[5px] ml-[15px] flex h-[18px] items-center self-start rounded-[5px] bg-[#dadada]">
        <button type="button" className="h-[17px] w-[48px] rounded-[5px] bg-white shadow-[0_0_2px_#00000050]">Layers</button>
        <button type="button" className="w-[53px]">Objects</button>
        <button type="button" className="w-[41px]">Nets</button>
      </div>
      <ul>
        {layers.map(([name, swatch], i) => (
          <li key={name} className={clsx('flex h-[15px] items-center', i === 0 && 'bg-[#f8f8f8]')}>
            <span className="flex w-[15px] justify-center">
              {i === 0 && <svg viewBox="0 0 5 8" className="h-[8px] w-[5px]" aria-hidden="true"><path d="M0 0l5 4-5 4z" fill={BLUE} /></svg>}
            </span>
            <span className={clsx('h-[10px] w-[13px]', swatch)} />
            <button type="button" aria-label={`Toggle ${name}`} className="mr-[4px] ml-[5px]"><Eye off={name === 'F.Fab'} /></button>
            {name}
          </li>
        ))}
      </ul>
      <button type="button" className="mt-auto flex h-[22px] items-center gap-[2px] bg-[#dfdfdf] pl-[11px] text-[#a9a9a9]">
        <svg viewBox="0 0 5 8" className="h-[8px] w-[5px]" aria-hidden="true"><path d="M0 0l5 4-5 4z" fill="#8f8f8f" /></svg>
        Layer Display Options
      </button>
    </div>
    <div className="flex flex-col px-[4px] pt-[1px]">
      <span className="h-[16px] leading-[16px]">Presets (Ctrl+Tab):</span>
      <Select label="Presets" value="" className="mb-[1px]" />
      <span className="h-[16px] leading-[16px]">Viewports (Option+Tab):</span>
      <Select label="Viewports" value="" />
    </div>
    <span className="mx-auto mt-[5px] mb-[2px] size-[4px] rounded-full bg-[#cfcfcf]" />
    <PanelTitle>Selection Filter</PanelTitle>
    <div className="mt-[4px] grid h-[93px] grid-cols-[83px_auto] content-between pl-[3px] font-['Roboto',sans-serif]">
      {filters.map(([label, on]) => <Check key={label} label={label} checked={on} className="h-[13px]" />)}
    </div>
  </aside>
);

const stats = [['Pads', '46', 'w-[47px]'], ['Vias', '0', 'w-[44px]'], ['Track Segments', '81', 'w-[96px]'], ['Nets', '14', 'w-[46px]'], ['Unrouted', '1', 'w-[60px]']];

export default function App() {
  return (
    <div className="flex h-screen w-full flex-col overflow-hidden bg-[#e8e8e8] font-['Inter','Liberation_Sans',sans-serif] text-[11px] leading-[14px] text-[#262626]">
      <header className="grid h-[24px] shrink-0 grid-cols-[1fr_auto_1fr] items-center border-b border-[#d6d4d5] bg-[#f3f1f2] px-[7px]">
        <div className="flex gap-[7px]">
          {['Close', 'Minimize', 'Zoom'].map((l) => (
            <button key={l} type="button" aria-label={l} className="size-[10px] rounded-full border border-[#c3c3c3] bg-[#d3d2d3]" />
          ))}
        </div>
        <h1 className="text-[11px] font-bold text-[#444]">*HTMAA_Week5 — PCB Editor</h1>
      </header>

      <div className="flex h-[27px] shrink-0 items-center gap-[2px] pl-[4px]">
        {topTools.map((t, i) =>
          t ? <ToolButton key={i} icon={t[0]} label={t[1]} /> : <Divider key={i} className={i > 19 && i < 33 ? 'mx-px' : 'mx-[2px]'} />
        )}
        <Select label="Design variant" value="< Default >" className="w-[84px]" />
        <Divider className="mx-[2px]" />
        <ToolButton icon="terminal" label="Scripting console" />
      </div>

      <div className="flex h-[30px] shrink-0 items-center gap-[4px] border-b border-[#b5b5b5] pl-[4px]">
        <div className="flex items-center gap-px">
          <Select label="Track width" value="Track: 0.500 mm (19.69 mils)" className="w-[175px]" />
          <ToolButton icon="autoTrack" label="Use existing track width" flags="on" />
        </div>
        <Divider />
        <Select label="Via size" value="Via: use netclass sizes" className="w-[149px]" />
        <Divider />
        <div className="flex items-center gap-[3px]">
          <button type="button" className="flex h-[18px] w-[127px] items-center gap-[5px] border border-[#8b8b8b] bg-white px-[3px]">
            <span className="size-[12px] bg-[#b03034]" />
            F.Cu (PgUp)
          </button>
          <button type="button" aria-label="Choose layer" className="flex size-[17px] items-center justify-center rounded-[4px] bg-white shadow-[0_0_1px_1px_#00000018]">
            <svg viewBox="0 0 8 8" className="size-[7px]" fill="none" stroke="#222" strokeWidth="1.600" aria-hidden="true"><path d="M1 2.500l3 3 3-3" /></svg>
          </button>
          <ToolButton icon="layerStack" label="Layer pair" />
        </div>
        <Divider />
        <Select label="Grid" value="0.2500 mm (9.84 mils)" className="w-[168px]" />
        <Divider />
        <Select label="Zoom" value="Zoom 4.25" className="w-[96px]" />
        <Divider />
        <Check label="Override locks" />
      </div>

      <div className="flex min-h-0 grow">
        <aside className="flex w-[250px] shrink-0 flex-col">
          <PanelTitle>
            Properties
            <button type="button" aria-label="Close properties" className="flex">
              <svg viewBox="0 0 12 12" className="size-[11px]" aria-hidden="true">
                <circle cx="6" cy="6" r="6" fill="#8b8b8b" />
                <path d="M3.500 3.500l5 5M8.500 3.500l-5 5" stroke="#ddd" strokeWidth="1.500" />
              </svg>
            </button>
          </PanelTitle>
          <p className="px-[4px] pt-[4px] pb-[4px]">No objects selected</p>
          <div className="mx-px grow border-b border-[#c9c9c9] bg-white" />
        </aside>
        <ToolColumn tools={leftTools} className="pl-[6px]" ruleClass="my-[2px]" />
        <main className="relative min-w-0 grow bg-[#000f21]">
          <Board />
          <DrcDialog />
        </main>
        <ToolColumn tools={rightTools} className="pr-[6px]" ruleClass="mt-[2px] mb-px" />
        <Appearance />
      </div>

      <dl className="flex h-[22px] shrink-0 pt-px pl-[9px] font-['Roboto',sans-serif] text-[10px] leading-[11px] text-[#ababab]">
        {stats.map(([k, v, w]) => (
          <div key={k} className={w}>
            <dt className="whitespace-nowrap">{k}</dt>
            <dd>{v}</dd>
          </div>
        ))}
      </dl>
      <footer className="flex h-[22px] shrink-0 items-center border-t border-[#c9c9c9] bg-linear-to-b from-[#e4e4e4] to-[#cdcdcd] pl-[4px] font-['Roboto',sans-serif] text-[10px] whitespace-pre text-[#444]">
        <span className="w-[600px]">File '/Users/ivanwren/Documents/Electronics/KiCAD Projects/HTMAA_Week5/HTMAA_Week5.kicad_pcb' saved.</span>
        <span className="w-[51px]">Z 4.25</span>
        <span className="w-[142px]">{'X 129.2500  Y 122.2500'}</span>
        <span className="w-[228px]">{'dx -10.0000  dy 6.7500  dist 12.0649'}</span>
        <span className="w-[136px]">grid 0.2500</span>
        <span className="w-[38px]">mm</span>
        <span>Select item(s)</span>
      </footer>
    </div>
  );
}
